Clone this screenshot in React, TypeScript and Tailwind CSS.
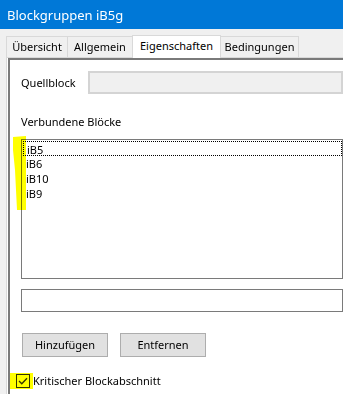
import React from 'react'

const font = { fontFamily: '"Noto Sans", "Liberation Sans", sans-serif' }

const tabs = [
  { label: 'Übersicht', w: 'w-[62px]' },
  { label: 'Allgemein', w: 'w-[66px]' },
  { label: 'Eigenschaften', w: 'w-[89px]' },
  { label: 'Bedingungen', w: 'w-[79px]' },
]
const items = ['iB5', 'iB6', 'iB10', 'iB9']

export default function App() {
  return (
    <div className="relative w-[343px] h-[394px] overflow-hidden bg-[#f0f0f0] text-[11px] text-black" style={font}>
      {/* title bar */}
      <div className="h-[29px] bg-[#0078d7] text-white text-[13px] pl-[7px] pt-[6px] leading-[18px]">Blockgruppen iB5g</div>

      {/* tabs */}
      <div className="flex items-end h-[28px] pl-[6px]">
        {tabs.map((t) =>
          t.label === 'Eigenschaften' ? (
            <div
              key={t.label}
              className={`${t.w} relative z-10 h-[23px] -mb-px -ml-px text-center bg-white border border-b-0 border-[#d9d9d9] leading-[20px]`}
            >
              {t.label}
            </div>
          ) : (
            <div
              key={t.label}
              className={`${t.w} h-[21px] text-center bg-[#f0f0f0] border border-b-0 border-[#d9d9d9] -ml-px first:ml-0 leading-[20px]`}
            >
              {t.label}
            </div>
          )
        )}
      </div>

      {/* tab page */}
      <div className="ml-[6px] h-[400px] bg-white border-l border-t border-[#d9d9d9]">
        <div className="h-full ml-px border-l-2 border-t-2 border-[#7a7a7a] pl-[11px] pt-[11px]">
          <div className="flex items-center h-[23px]">
            <span className="w-[67px] leading-[16px]">Quellblock</span>
            <div className="flex-1 h-[23px] bg-[#f0f0f0] border-2 border-[#d4d4d4]" />
          </div>

          <div className="mt-[20px] leading-[16px]">Verbundene Blöcke</div>

          <div className="mt-[9px] h-[140px] border border-[#7a7a7a] pt-px pl-px">
            {items.map((it, i) => (
              <div
                key={it}
                className={`h-[15px] pl-[3px] leading-[15px] ${
                  i === 0 ? 'border border-dotted border-black pl-[2px] leading-[13px]' : ''
                }`}
              >
                {it}
              </div>
            ))}
          </div>

          <div className="mt-[10px] h-[23px] border border-[#7a7a7a]" />

          <div className="flex gap-[12px] mt-[21px] pl-px">
            <button className="w-[86px] h-[24px] bg-[#e1e1e1] border border-[#adadad] leading-[20px]">Hinzufügen</button>
            <button className="w-[86px] h-[24px] bg-[#e1e1e1] border border-[#adadad] leading-[20px]">Entfernen</button>
          </div>

          <div className="flex items-center mt-[16px] -ml-[5px] h-[16px]">
            <div className="relative w-[14px] h-[14px] border border-[#333] bg-white flex items-center justify-center">
              <svg width="10" height="8" viewBox="0 0 10 8">
                <path d="M1 4 L3.8 6.8 L9 1.2" fill="none" stroke="#333" strokeWidth="1.3" />
              </svg>
            </div>
            <span className="ml-[3px] leading-[16px]">Kritischer Blockabschnitt</span>
          </div>
        </div>
      </div>

      {/* yellow marker highlights */}
      <svg className="absolute left-0 top-0 pointer-events-none mix-blend-multiply" width="343" height="394">
        <path d="M13 137 L26 136 L26 210 L17 210 L15 170 L13 150 Z" fill="#ffff00" />
        <path d="M10 373 L33 373 L33 389 L10 389 Z" fill="#ffff00" />
      </svg>
    </div>
  )
}
